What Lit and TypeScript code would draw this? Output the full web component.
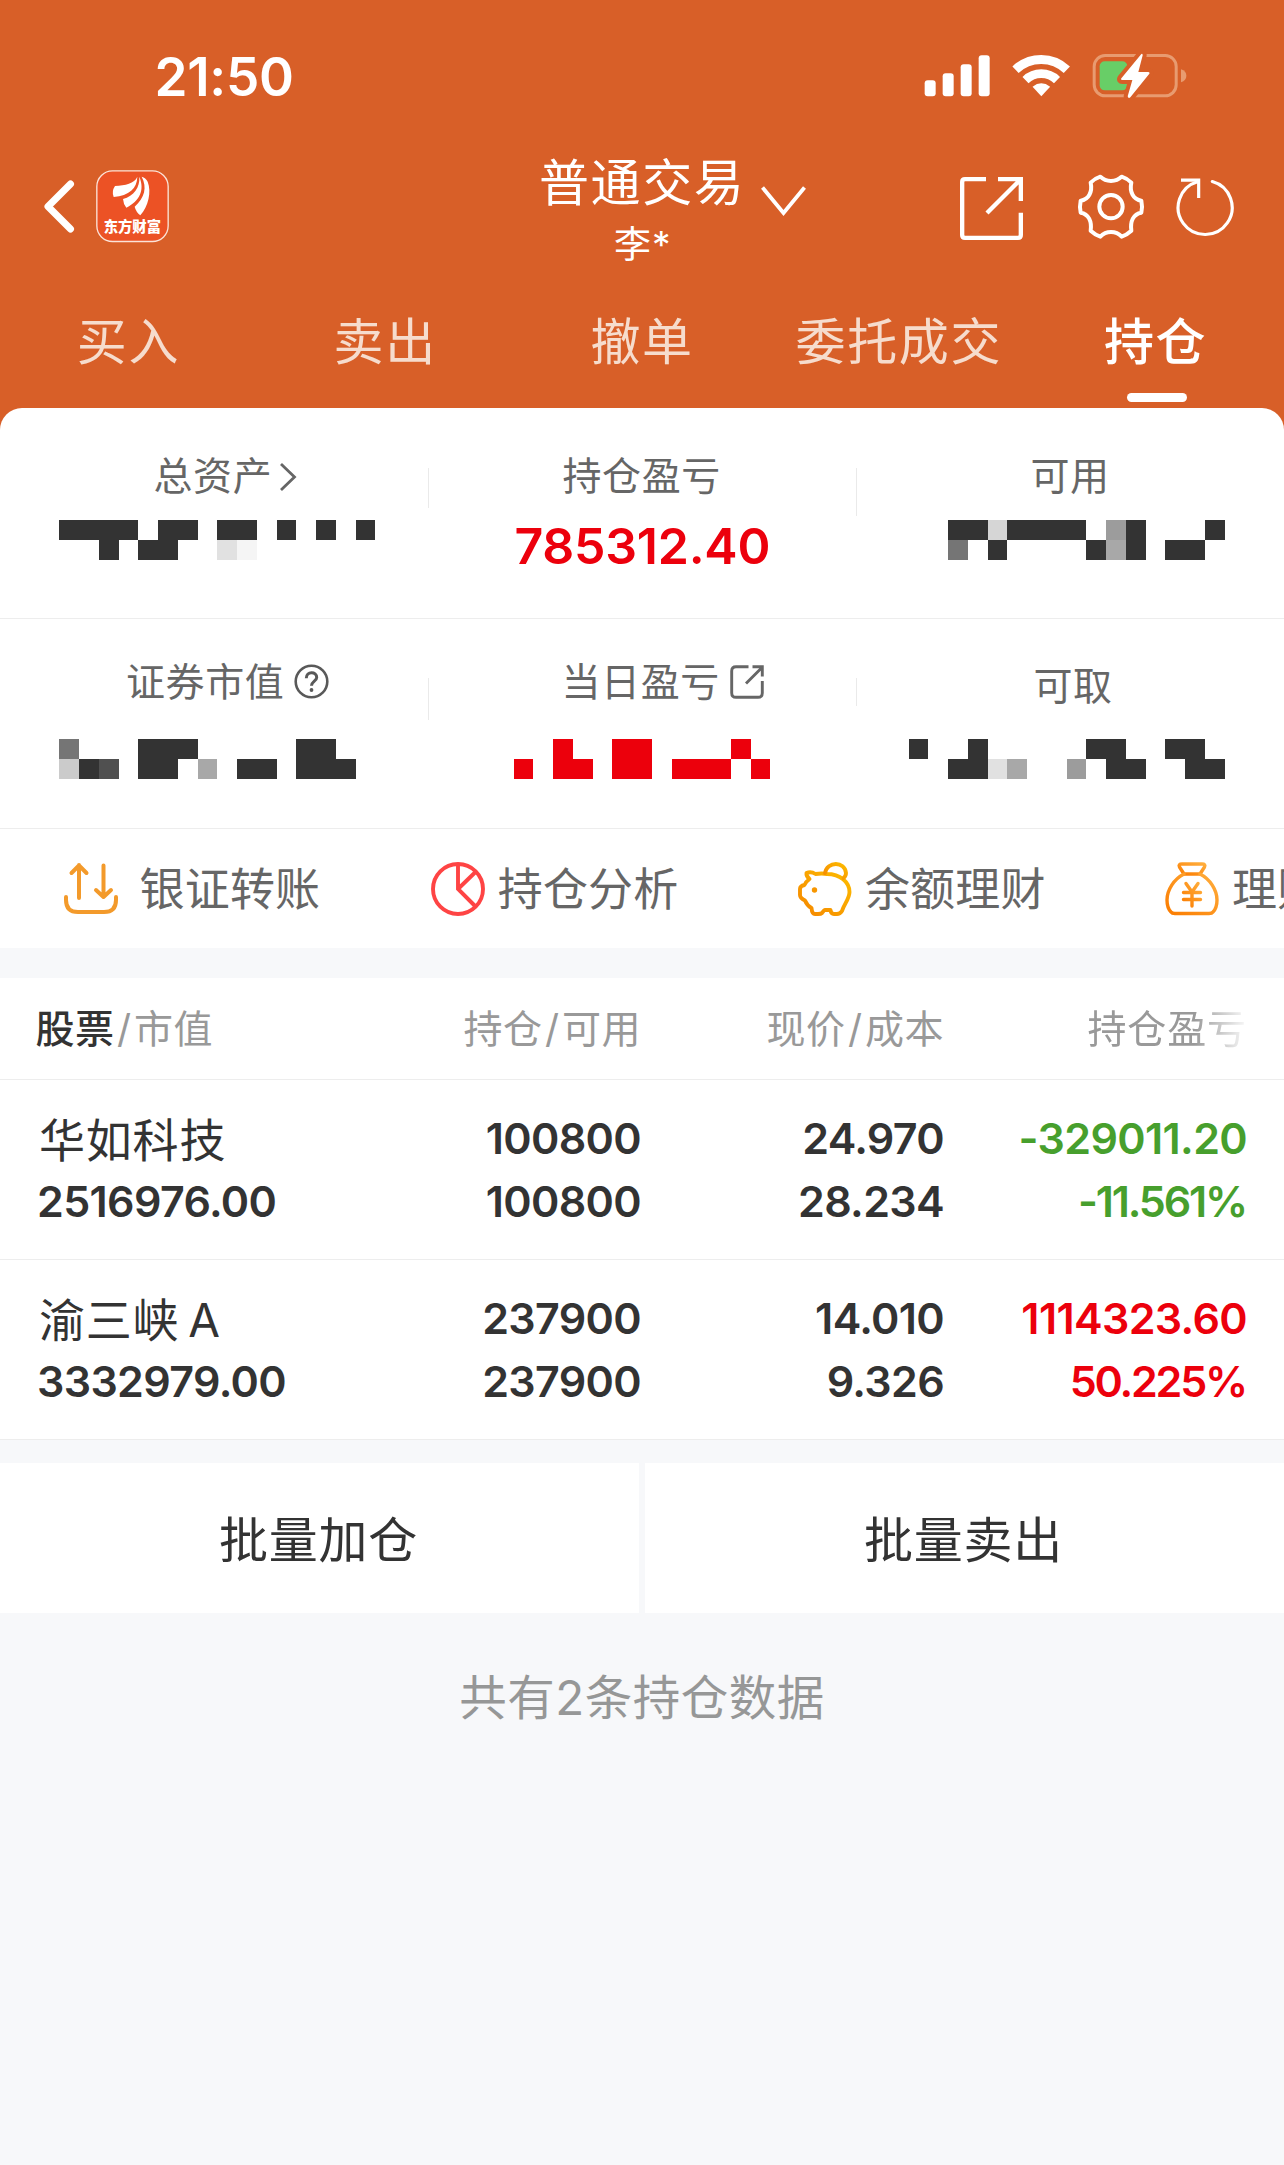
import { LitElement, html, svg, css } from "lit";
import { customElement, property } from "lit/decorators.js";

type Cell = [column: number, row: number, color?: string];

const CELL = 19.75;
const DARK = "#333333";
const RED = "#ec000c";

/* Censored amount, drawn on the page-wide grid of square cells. */
@customElement("masked-amount")
export class MaskedAmount extends LitElement {
  static styles = css`
    :host {
      display: block;
      height: 40px;
    }
    .mask {
      display: block;
      width: 428px;
      height: 40px;
      shape-rendering: crispEdges;
    }
  `;

  @property({ attribute: false }) cells: Cell[] = [];
  @property({ type: Number }) offset = 0;
  @property() color = DARK;

  render() {
    return html`<svg class="mask" viewBox="0 0 428 40">
      ${this.cells.map(([col, row, color]) => {
        const x = Math.round(col * CELL);
        const w = Math.round((col + 1) * CELL) - x;
        return svg`<rect x=${x - this.offset} y=${row * 20} width=${w} height="20" fill=${color ?? this.color}></rect>`;
      })}
    </svg>`;
  }
}

const cells = (top: number[], bottom: number[], extra: Cell[] = []): Cell[] => [
  ...top.map((c): Cell => [c, 0]),
  ...bottom.map((c): Cell => [c, 1]),
  ...extra,
];

const totalMask = cells([3, 4, 5, 6, 8, 9, 11, 12, 14, 16, 18], [5, 7, 8], [
  [11, 1, "#e1e1e1"],
  [12, 1, "#f5f5f5"],
]);
const usableMask = cells([48, 49, 51, 52, 53, 54, 57, 61], [50, 55, 57, 59, 60], [
  [50, 0, "#d6d6d6"],
  [56, 0, "#9c9c9c"],
  [48, 1, "#757575"],
  [56, 1, "#a8a8a8"],
]);
const marketMask = cells([7, 8, 9, 15, 16], [4, 7, 8, 12, 13, 15, 16, 17], [
  [3, 0, "#757575"],
  [3, 1, "#cbcbcb"],
  [5, 1, "#505050"],
  [10, 1, "#a8a8a8"],
]);
const todayMask = cells([28, 31, 32, 37], [26, 28, 29, 31, 32, 34, 35, 36, 38]);
const drawableMask = cells([46, 49, 55, 56, 59, 60], [48, 49, 56, 57, 60, 61], [
  [50, 1, "#e1e1e1"],
  [51, 1, "#a8a8a8"],
  [54, 1, "#9c9c9c"],
]);

const statusIcons = html`<svg class="status-icons" viewBox="190 95 800 140">
  <g fill="#fff">
    <rect x="195" y="180" width="33" height="48" rx="9"></rect>
    <rect x="249" y="159" width="33" height="69" rx="9"></rect>
    <rect x="303" y="132" width="33" height="96" rx="9"></rect>
    <rect x="357" y="105" width="33" height="123" rx="9"></rect>
    <path d="M545 228L518.6 199Q545 179 571.4 199Z"></path>
  </g>
  <g fill="none" stroke="#fff">
    <path stroke-width="27" d="M467.5 148A111.5 111.5 0 0 1 621.5 148"></path>
    <path stroke-width="26" d="M497.5 179A68 68 0 0 1 592 179"></path>
  </g>
  <rect x="703.5" y="105.5" width="246" height="121" rx="33" fill="none" stroke="#e89b70" stroke-width="9"></rect>
  <path d="M964 147Q980 152 980 166.500Q980 181 964 186Z" fill="#e89b70"></path>
  <rect x="720" y="123" width="83" height="87" rx="15" fill="#68ce67"></rect>
  <path d="M845 101L785 174Q782 179 788 179H818L804 228Q806 236 812 231L869 160Q871 155 865 155H836L849 105Q849 98 845 101Z" fill="#fff" stroke="#d85f28" stroke-width="24" stroke-linejoin="round" paint-order="stroke"></path>
</svg>`;

const backIcon = html`<svg class="back" viewBox="0 0 32 56">
  <path d="M27.500 5L5 27.500L27.500 50" fill="none" stroke="#fff" stroke-width="7" stroke-linecap="round" stroke-linejoin="round"></path>
</svg>`;

const logo = html`<svg class="logo" viewBox="288 510 219 218">
  <rect x="290.500" y="512.500" width="214" height="212" rx="47" fill="#ec5225" stroke="#fbe3d8" stroke-width="4"></rect>
  <g fill="#fff">
    <path d="M412 530C403 551 376 556 345 558Q334 574 341 591C388 586 411 566 412 530Z"></path>
    <path d="M418 530C420 562 402 588 369 597Q370 612 379 623C419 603 435 570 418 530Z"></path>
    <path d="M425 530C442 563 434 592 404 620Q408 636 421 646C445 618 455 576 443 545Q437 533 425 530Z"></path>
  </g>
  <text class="logo-text" x="397" y="697" text-anchor="middle" textLength="172">东方财富</text>
</svg>`;

const openIcon = html`<svg class="open" viewBox="297 468 195 195">
  <g fill="none" stroke="#fff" stroke-width="13">
    <path d="M378 477.500H315Q306.500 477.500 306.500 486V645Q306.500 653.500 315 653.500H474Q482.500 653.500 482.500 645V578"></path>
    <path d="M414 477.500H482.500V543M381 579L481 479"></path>
  </g>
</svg>`;

const gearIcon = html`<svg class="gear" viewBox="650 460 210 201">
  <g fill="none" stroke="#fff" stroke-width="12" stroke-linejoin="round">
    <circle cx="755" cy="561" r="35"></circle>
    <path d="M723 471C740 488 770 488 787 471Q803 476 816 489C810 517 822 540 846 543Q850 561 846 579C822 583 812 605 816 633Q803 645 787 651C770 632 740 632 723 651Q707 645 694 633C698 605 688 583 664 579Q660 561 664 543C688 540 700 517 694 489Q707 476 723 471Z"></path>
  </g>
</svg>`;

const refreshIcon = html`<svg class="refresh" viewBox="948 471 180 180">
  <g fill="none" stroke="#fff" stroke-width="9.500">
    <path d="M1057 484.500A81 81 0 1 1 1012 485" stroke-linecap="round"></path>
    <path d="M963 480.500H1016V534"></path>
  </g>
</svg>`;

const transferIcon = html`<svg class="action-icon" viewBox="0 0 54 54">
  <g fill="none" stroke="#f39a2b" stroke-width="4" stroke-linecap="round" stroke-linejoin="round">
    <path d="M15 36V3M7.500 11L15 3.500L22.500 11M39.500 3.500V35M32 28L39.500 35L47 28"></path>
    <path d="M2 35V38Q2 50 14 50H40Q52 50 52 38V35"></path>
  </g>
</svg>`;

const analysisIcon = html`<svg class="action-icon" viewBox="0 0 54 54">
  <g fill="none" stroke="#fe4444" stroke-width="3.900">
    <circle cx="27" cy="27" r="25"></circle>
    <path d="M27 2V27L44.500 44.500M27 27L44.500 10"></path>
  </g>
</svg>`;

const piggyIcon = html`<svg class="action-icon" viewBox="0 0 54 54">
  <defs>
    <linearGradient id="pig" x1="1" y1="0" x2="0" y2="1">
      <stop offset="0" stop-color="#fdbc00"></stop>
      <stop offset="1" stop-color="#f58700"></stop>
    </linearGradient>
  </defs>
  <g fill="none" stroke="url(#pig)" stroke-width="3.900" stroke-linejoin="round" stroke-linecap="round">
    <path d="M8.500 11Q13 9 17.500 12Q24 11 29 12C42 12 51.500 20 51.500 30C51.500 37 46 42 44 49Q42 52 39 52H36Q33 52 32.500 48H27Q26 48 24 51Q23 52 20 52H17Q14 52 13.500 46Q9 43.500 7 38.500Q2 36 2 33V27Q2 24 6.500 23Q7.500 20 11.500 17Q8 14 8.500 11Z"></path>
    <path d="M27 11C29 -1 47 -1 48 11Q48 14 45.500 16"></path>
  </g>
  <circle cx="16.500" cy="28" r="2.700" fill="#f79600"></circle>
</svg>`;

const bagIcon = html`<svg class="action-icon" viewBox="0 0 54 54">
  <defs>
    <linearGradient id="bag" x1="1" y1="0" x2="0" y2="1">
      <stop offset="0" stop-color="#ffae3d"></stop>
      <stop offset="1" stop-color="#fb7c00"></stop>
    </linearGradient>
  </defs>
  <g fill="none" stroke="url(#bag)" stroke-width="3.400" stroke-linejoin="round" stroke-linecap="round">
    <path d="M17 2H37Q41 2 39.500 5L35 12H19L14.500 5Q13 2 17 2Z"></path>
    <path d="M19 12C9 17 2 28 2 38Q2 46 6 50Q7 51.500 10 51.500H44Q47 51.500 48 50Q52 46 52 38C52 28 45 17 35 12"></path>
    <path d="M21 21.500L27 30L33 21.500M27 30V44M18.500 30.500H35.500M18.500 37.500H35.500"></path>
  </g>
</svg>`;

const helpIcon = html`<svg class="help" viewBox="0 0 35 35">
  <g fill="none" stroke="#595959" stroke-width="2.600">
    <circle cx="17.500" cy="17.500" r="15.800"></circle>
    <path d="M12.300 14.300C12.300 7 22.700 7 22.700 13.500C22.700 17 17.500 17.500 17.500 21.800" stroke-width="3"></path>
  </g>
  <circle cx="17.500" cy="26" r="1.900" fill="#595959"></circle>
</svg>`;

const linkIcon = html`<svg class="link" viewBox="0 0 34 34">
  <g fill="none" stroke="#666" stroke-width="2.900">
    <path d="M18.500 1.700H6Q1.700 1.700 1.700 6V28Q1.700 32.300 6 32.300H28Q32.300 32.300 32.300 28V16"></path>
    <path d="M22.500 1.700H32.300V11.500M16 18.500L32 2.500"></path>
  </g>
</svg>`;

interface Holding {
  name: string;
  value: string;
  held: string;
  usable: string;
  price: string;
  cost: string;
  profit: string;
  rate: string;
  trend: "up" | "down";
}

const holdings: Holding[] = [
  { name: "华如科技", value: "2516976.00", held: "100800", usable: "100800", price: "24.970", cost: "28.234", profit: "-329011.20", rate: "-11.561%", trend: "down" },
  { name: "渝三峡 A", value: "3332979.00", held: "237900", usable: "237900", price: "14.010", cost: "9.326", profit: "1114323.60", rate: "50.225%", trend: "up" },
];

@customElement("app-root")
export class AppRoot extends LitElement {
  static styles = css`
    :host {
      display: block;
      width: 1284px;
      height: 2165px;
      overflow: hidden;
      background: #f7f8fa;
      color: #333;
      font-family: Inter, "Noto Sans CJK SC", sans-serif;
      font-feature-settings: "calt" 0;
      white-space: nowrap;
    }
    svg { display: block; flex: none; }

    .header { height: 408px; background: #d85f28; color: #fff; }
    .status { display: flex; height: 150px; }
    .time { width: 768.800px; padding-left: 154.500px; padding-top: 46.500px; font-size: 53px; line-height: 60px; font-weight: 600; letter-spacing: -0.3px; }
    .status-icons { width: 266.700px; height: 46.700px; margin-top: 51.700px; }

    .nav { display: flex; align-items: flex-start; height: 141px; }
    .back { width: 32px; height: 56px; margin: 29px 0 0 43px; }
    .logo { width: 73px; height: 72.700px; margin: 20px 0 0 21px; }
    .logo-text { font: 900 43px "Noto Sans CJK SC", sans-serif; fill: #fff; }
    .title { width: 206px; margin: 2px 0 0 370px; }
    .account-type { font-size: 50px; line-height: 62px; letter-spacing: 1.600px; }
    .account-name { font-size: 37px; line-height: 60px; margin-top: 1px; padding-left: 75px; letter-spacing: 1px; }
    .drop { width: 47px; height: 32px; margin: 35px 0 0 15px; }
    .open { width: 65px; height: 65px; margin: 26px 0 0 152px; }
    .gear { width: 70px; height: 67px; margin: 23.300px 0 0 52.200px; }
    .refresh { width: 60px; height: 60px; margin: 27px 0 0 29.800px; }

    .tabs { display: grid; grid-template-columns: repeat(5, 1fr); height: 117px; }
    .tab { display: flex; flex-direction: column; align-items: center; padding-top: 21px; font-size: 50px; line-height: 60px; letter-spacing: 1.600px; color: #f6dccd; }
    .tab.active { color: #fff; font-weight: 500; }
    .tab.active::after { content: ""; width: 60px; height: 9px; border-radius: 5px; background: #fff; margin: 21px 0 0 2px; }

    .panel-back { background: #d85f28; }
    .panel { background: #fff; border-radius: 22px 22px 0 0; height: 540px; overflow: hidden; }
    .summary { display: grid; grid-template-columns: repeat(3, 428px); height: 210px; border-bottom: 1px solid #ededed; }
    .summary.second { height: 209px; }
    .cell { display: flex; flex-direction: column; position: relative; }
    .label { display: flex; align-items: center; height: 50px; margin-top: 43px; font-size: 39px; letter-spacing: 0.6px; line-height: 50px; color: #666; }
    .second .label { margin-top: 38px; }
    .second .label.low { margin-top: 42px; }
    .second .label.low + masked-amount { margin-top: 28px; }
    .cell masked-amount { margin-top: 19px; }
    .second masked-amount { margin-top: 32px; }
    .l-total { padding-left: 153.500px; }
    .l-market { padding-left: 126px; }
    .l-profit { padding-left: 134.500px; }
    .l-today { padding-left: 133.500px; }
    .l-usable { padding-left: 174.500px; }
    .l-drawable { padding-left: 177.500px; }
    .split::after { content: ""; position: absolute; right: -1px; top: 60px; width: 1px; height: 40px; background: #eaeaea; }
    .split.tall::after { height: 48px; }
    .second .split::after { top: 59px; height: 42px; }
    .second .split.short::after { height: 28px; }
    .more { width: 18px; height: 30px; margin-left: 7px; margin-top: 2px; }
    .help { width: 35px; height: 35px; margin-left: 9.500px; margin-top: -1px; }
    .link { width: 34px; height: 34px; margin-left: 10.500px; margin-top: -1px; }
    .amount { font-size: 50px; line-height: 60px; font-weight: 600; letter-spacing: -0.25px; color: #ec000c; padding-left: 86.500px; margin-top: 15px; }

    .actions { display: flex; height: 119px; overflow: hidden; padding-left: 63.500px; }
    .action { display: flex; flex: none; align-items: center; width: 367.200px; font-size: 45px; letter-spacing: 0.2px; line-height: 60px; color: #666; gap: 13px; }
    .action > span { padding-top: 2px; }
    .action.wide { gap: 22px; }
    .action-icon { width: 54px; height: 54px; }

    .table { margin-top: 30px; background: #fff; }
    .row { display: grid; grid-template-columns: 320px 321px 303px 303px; }
    .row > * { text-align: right; }
    .row > :first-child { text-align: left; padding-left: 37px; }
    .row.head > :first-child { padding-left: 35.500px; }
    .head { height: 101px; border-bottom: 1px solid #ededed; font-size: 39px; letter-spacing: 0.5px; line-height: 102px; color: #999; }
    .head .strong { color: #333; font-weight: 500; }
    .slash { padding: 0 2.500px; }
    .fade { letter-spacing: 0.9px; -webkit-mask-image: linear-gradient(to right, #000 250px, transparent 306px); mask-image: linear-gradient(to right, #000 250px, transparent 306px); }
    .holding { height: 179px; border-bottom: 1px solid #ededed; padding-top: 0; }
    .col { display: flex; flex-direction: column; padding-top: 26.500px; font-size: 43px; line-height: 63px; font-weight: 600; letter-spacing: -0.65px; }
    .name { font-size: 46px; font-weight: 400; letter-spacing: 0.8px; word-spacing: -5px; padding: 4px 0 0 2px; line-height: 59px; }
    .rate { letter-spacing: -2.200px; padding-right: 1px; }
    .down { color: #479f2d; }
    .up { color: #ec000c; }

    .buttons { display: grid; grid-template-columns: 639px 639px; gap: 6px; margin-top: 23px; }
    .button { height: 150px; background: #fff; text-align: center; font-size: 49px; letter-spacing: 0.7px; line-height: 155px; padding-right: 2px; }
    .footer { margin-top: 55px; text-align: center; font-size: 47.500px; letter-spacing: 0.5px; line-height: 60px; color: #969797; }
  `;

  private row(h: Holding) {
    return html`<div class="row holding">
      <div class="col"><span class="name">${h.name}</span><span>${h.value}</span></div>
      <div class="col"><span>${h.held}</span><span>${h.usable}</span></div>
      <div class="col"><span>${h.price}</span><span>${h.cost}</span></div>
      <div class="col ${h.trend}"><span>${h.profit}</span><span class="rate">${h.rate}</span></div>
    </div>`;
  }

  render() {
    return html`
      <header class="header">
        <div class="status"><div class="time">21:50</div>${statusIcons}</div>
        <div class="nav">
          ${backIcon}${logo}
          <div class="title">
            <div class="account-type">普通交易</div>
            <div class="account-name">李*</div>
          </div>
          <svg class="drop" viewBox="0 0 47 32">
            <path d="M2.500 2.500L23.500 28L44.500 2.500" fill="none" stroke="#fff" stroke-width="3.800"></path>
          </svg>
          ${openIcon}${gearIcon}${refreshIcon}
        </div>
        <nav class="tabs">
          ${["买入", "卖出", "撤单", "委托成交", "持仓"].map(
            (t, i) => html`<div class="tab ${i === 4 ? "active" : ""}">${t}</div>`
          )}
        </nav>
      </header>
      <div class="panel-back">
        <section class="panel">
          <div class="summary">
            <div class="cell split">
              <div class="label l-total">总资产<svg class="more" viewBox="0 0 18 30"><path d="M2 2L15.500 15L2 28" fill="none" stroke="#666" stroke-width="2.800"></path></svg></div>
              <masked-amount .cells=${totalMask} .offset=${0}></masked-amount>
            </div>
            <div class="cell split tall">
              <div class="label l-profit">持仓盈亏</div>
              <div class="amount">785312.40</div>
            </div>
            <div class="cell">
              <div class="label l-usable">可用</div>
              <masked-amount .cells=${usableMask} .offset=${856}></masked-amount>
            </div>
          </div>
          <div class="summary second">
            <div class="cell split">
              <div class="label l-market">证券市值${helpIcon}</div>
              <masked-amount .cells=${marketMask} .offset=${0}></masked-amount>
            </div>
            <div class="cell split short">
              <div class="label l-today">当日盈亏${linkIcon}</div>
              <masked-amount .cells=${todayMask} .offset=${428} .color=${RED}></masked-amount>
            </div>
            <div class="cell">
              <div class="label low l-drawable">可取</div>
              <masked-amount .cells=${drawableMask} .offset=${856}></masked-amount>
            </div>
          </div>
          <div class="actions">
            <div class="action wide">${transferIcon}<span>银证转账</span></div>
            <div class="action">${analysisIcon}<span>持仓分析</span></div>
            <div class="action">${piggyIcon}<span>余额理财</span></div>
            <div class="action">${bagIcon}<span>理财</span></div>
          </div>
        </section>
      </div>
      <section class="table">
        <div class="row head">
          <div><span class="strong">股票</span><span class="slash">/</span>市值</div>
          <div>持仓<span class="slash">/</span>可用</div>
          <div>现价<span class="slash">/</span>成本</div>
          <div class="fade">持仓盈亏</div>
        </div>
        ${holdings.map((h) => this.row(h))}
      </section>
      <div class="buttons">
        <div class="button">批量加仓</div>
        <div class="button">批量卖出</div>
      </div>
      <div class="footer">共有2条持仓数据</div>
    `;
  }
}
